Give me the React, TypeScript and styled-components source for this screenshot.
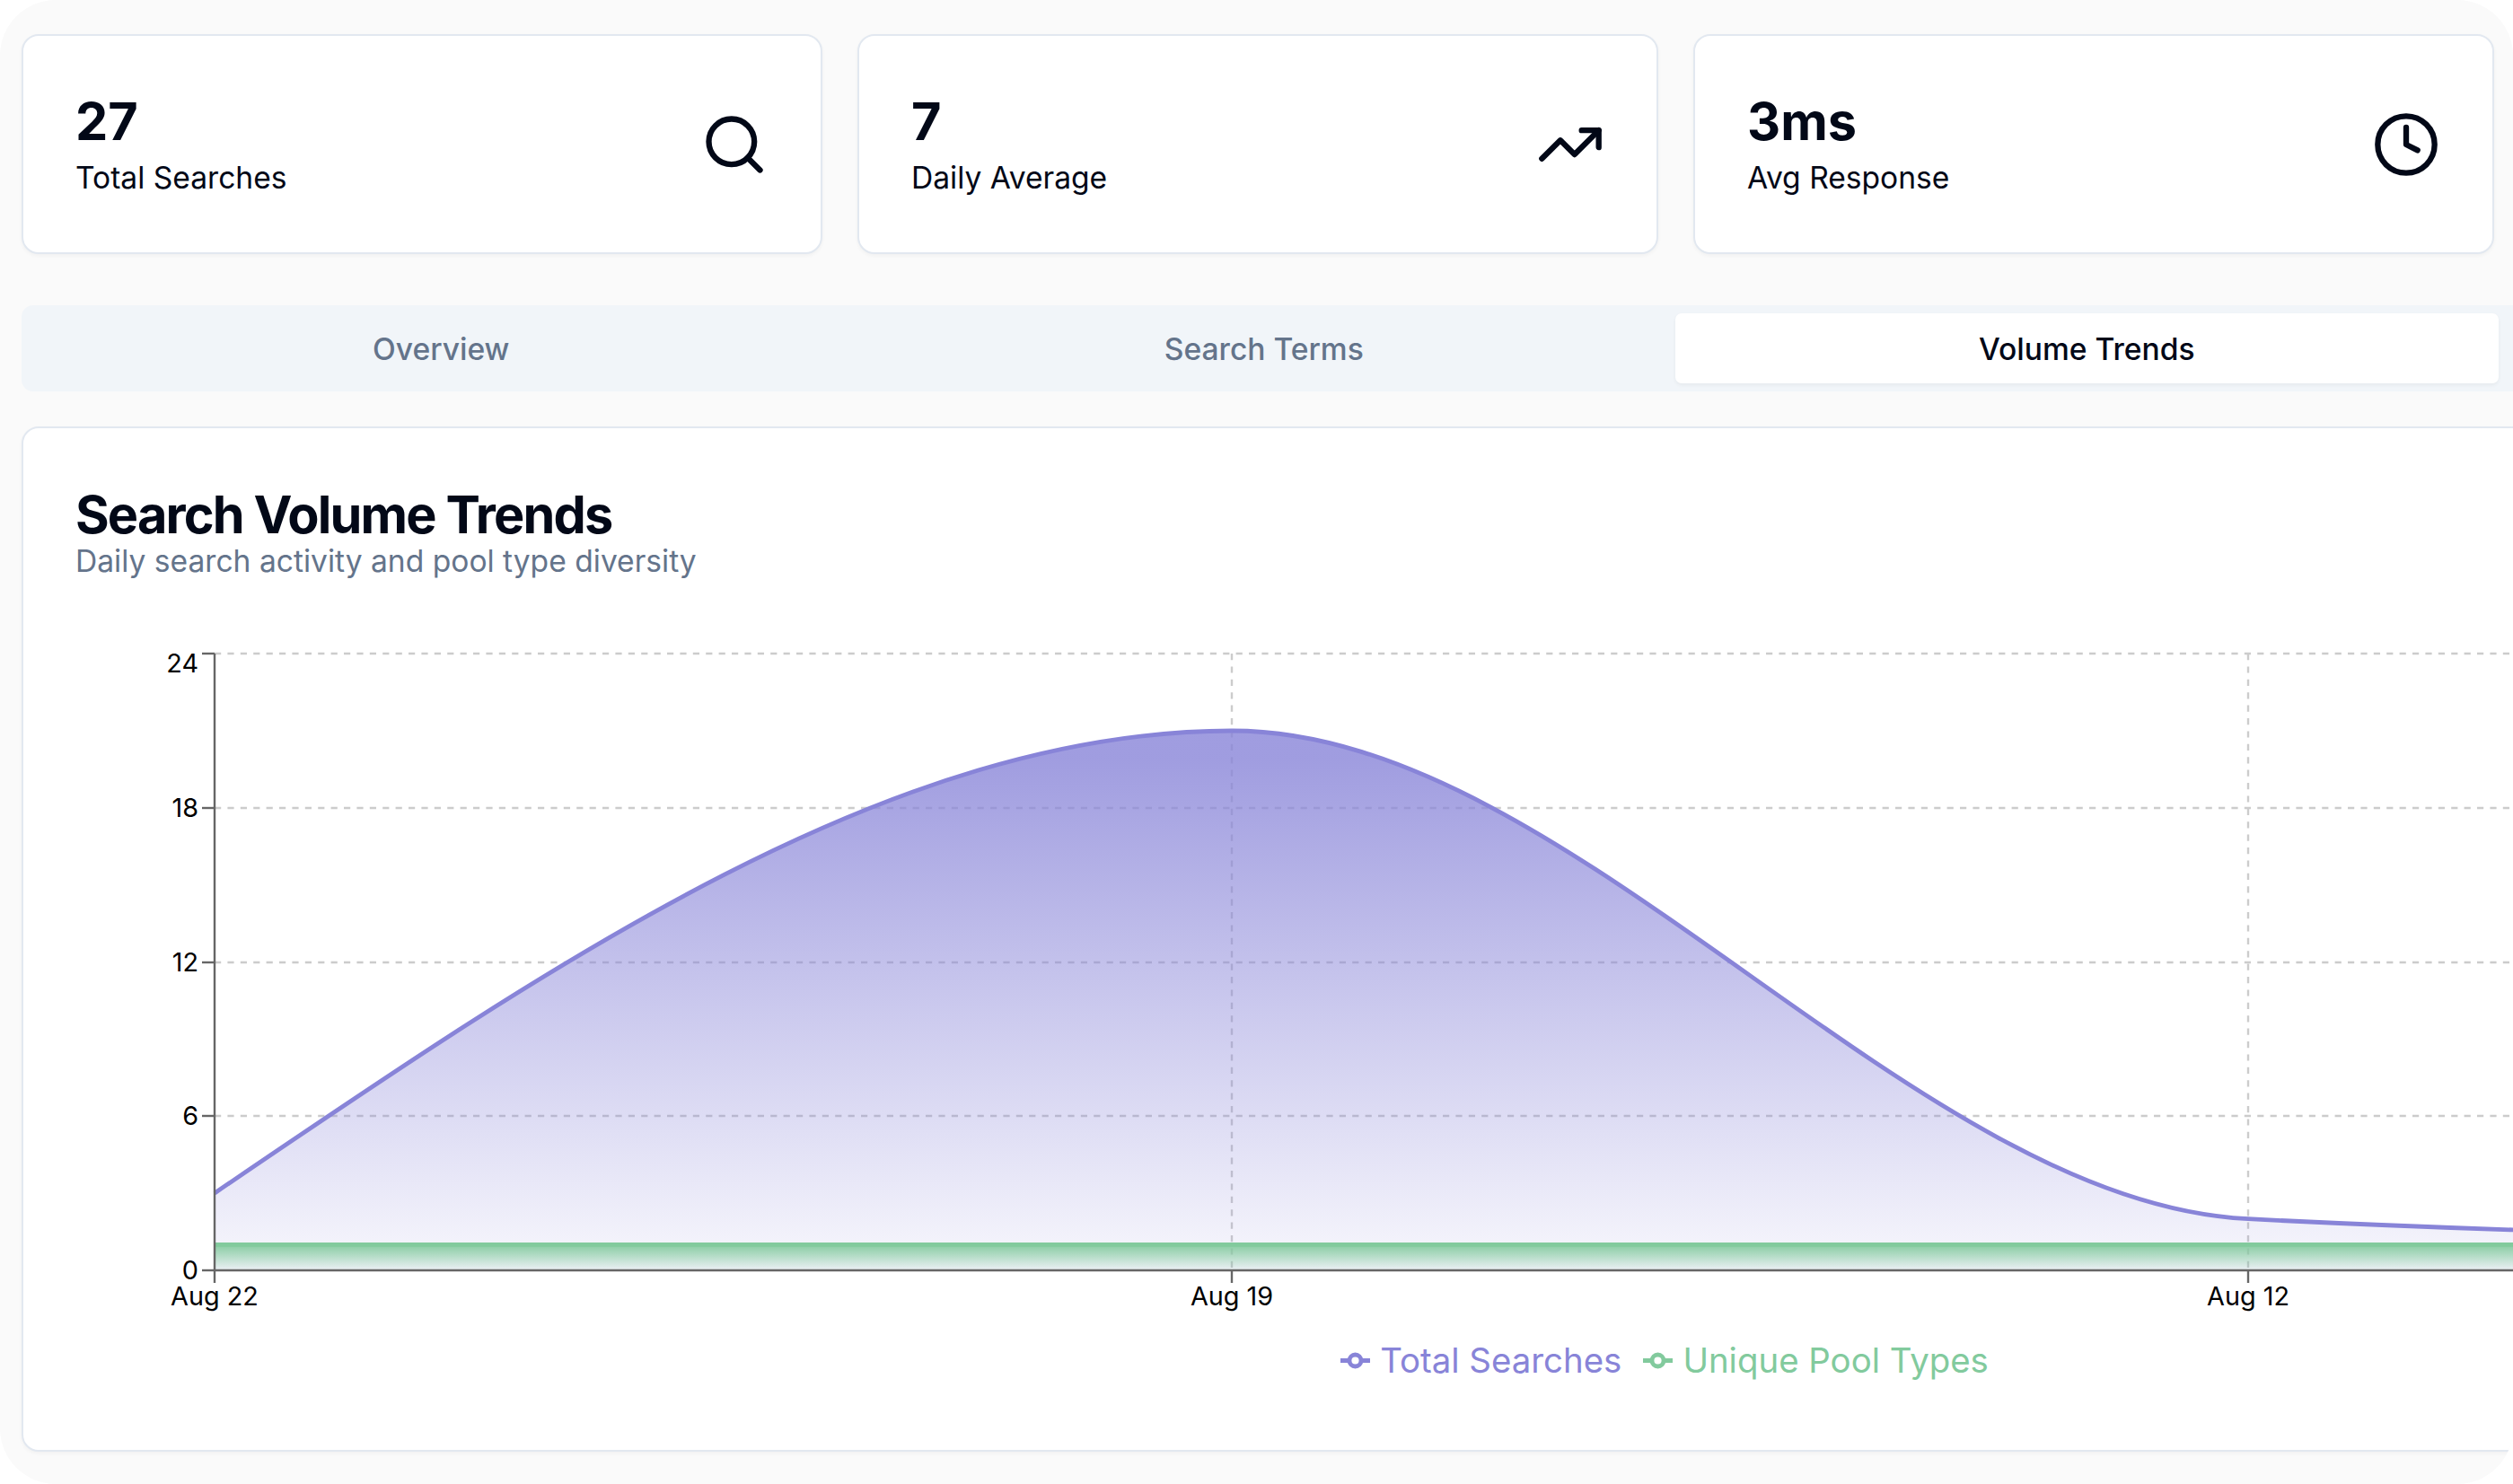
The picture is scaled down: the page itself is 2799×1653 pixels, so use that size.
import React from "react";
import styled, { createGlobalStyle } from "styled-components";
import { Search, TrendingUp, Clock } from "lucide-react";

const GlobalStyle = createGlobalStyle`
  html, body {
    margin: 0;
    padding: 0;
    background: #ffffff;
    font-family: Inter, "Liberation Sans", sans-serif;
  }
  * {
    box-sizing: border-box;
  }
`;

const Shell = styled.div`
  width: 2799px;
  height: 1653px;
  padding: 38px 0 0 24px;
  background: #fafafa;
  border-radius: 62px;
  overflow: hidden;
`;

const StatGrid = styled.div`
  display: grid;
  grid-template-columns: repeat(3, 891.5px);
  gap: 39.5px;
`;

const StatCard = styled.div`
  height: 245px;
  padding: 0 58px;
  display: flex;
  align-items: center;
  justify-content: space-between;
  background: #ffffff;
  border: 2.4px solid #e2e8f0;
  border-radius: 19px;
  box-shadow: 0 2px 4px rgba(0, 0, 0, 0.04);
`;

const StatValue = styled.div`
  font-size: 57.6px;
  line-height: 66px;
  font-weight: 700;
  color: #020817;
`;

const StatLabel = styled.div`
  margin-top: 8px;
  font-size: 33.6px;
  line-height: 44px;
  font-weight: 400;
  color: #020817;
`;

const TabList = styled.div`
  display: grid;
  grid-template-columns: repeat(3, 916.5px);
  width: 2790px;
  margin-top: 57px;
  padding: 9px;
  background: #f1f5f9;
  border-radius: 13px;
`;

const Tab = styled.div<{ $active?: boolean }>`
  height: 78px;
  display: flex;
  align-items: center;
  justify-content: center;
  font-size: 33.6px;
  font-weight: 500;
  border-radius: 7px;
  color: ${({ $active }) => ($active ? "#020817" : "#64748b")};
  background: ${({ $active }) => ($active ? "#ffffff" : "transparent")};
  box-shadow: ${({ $active }) =>
    $active ? "0 2px 4px rgba(0, 0, 0, 0.05)" : "none"};
`;

const ChartCard = styled.div`
  width: 3660px;
  height: 1142px;
  margin-top: 39px;
  padding: 66px 58px 0;
  background: #ffffff;
  border: 2.4px solid #e2e8f0;
  border-radius: 19px;
  box-shadow: 0 2px 4px rgba(0, 0, 0, 0.04);
`;

const ChartTitle = styled.h2`
  margin: 0;
  font-size: 57.6px;
  line-height: 60px;
  font-weight: 700;
  letter-spacing: -1.84px;
  color: #020817;
`;

const ChartSubtitle = styled.p`
  margin: 0;
  font-size: 33.6px;
  line-height: 44px;
  color: #64748b;
`;

const ChartSvg = styled.svg`
  display: block;
  margin-top: 53px;
  overflow: visible;
`;

const TickText = styled.text`
  font-family: Inter, "Liberation Sans", sans-serif;
  font-size: 28.8px;
  fill: #000000;
`;

const Legend = styled.div`
  display: flex;
  justify-content: center;
  gap: 24px;
  margin-top: 45px;
`;

const LegendItem = styled.div<{ $color: string }>`
  display: flex;
  align-items: center;
  gap: 11px;
  font-size: 38.4px;
  line-height: 50px;
  color: ${({ $color }) => $color};
`;

const stats = [
  { value: "27", label: "Total Searches", Icon: Search },
  { value: "7", label: "Daily Average", Icon: TrendingUp },
  { value: "3ms", label: "Avg Response", Icon: Clock },
];

const PURPLE = "#8884d8";
const GREEN = "#82ca9d";

// page coordinates minus the svg origin
const ox = 84;
const oy = 700;
const px = (x: number) => x - ox;
const py = (y: number) => y - oy;

const yTicks = [
  { label: "24", y: 728 },
  { label: "18", y: 900 },
  { label: "12", y: 1072 },
  { label: "6", y: 1243 },
  { label: "0", y: 1415 },
];

const xTicks = [
  { label: "Aug 22", x: 239 },
  { label: "Aug 19", x: 1372 },
  { label: "Aug 12", x: 2504 },
];

const curve =
  `M${px(239)} ${py(1329)}` +
  `C${px(617)} ${py(1071.5)} ${px(994)} ${py(814)} ${px(1372)} ${py(814)}` +
  `C${px(1750)} ${py(814)} ${px(2126)} ${py(1338.6)} ${px(2504)} ${py(1357.7)}` +
  `C${px(2882)} ${py(1376.8)} ${px(3259)} ${py(1381.6)} ${px(3637)} ${py(1386.4)}`;

function VolumeChart() {
  const base = py(1415);
  const flat = py(1386.4);
  return (
    <ChartSvg width={3542} height={745} viewBox="0 0 3542 745">
      <defs>
        <linearGradient id="fillSearches" x1="0" y1="0" x2="0" y2="1">
          <stop offset="5%" stopColor={PURPLE} stopOpacity={0.8} />
          <stop offset="95%" stopColor={PURPLE} stopOpacity={0.1} />
        </linearGradient>
        <linearGradient id="fillPools" x1="0" y1="0" x2="0" y2="1">
          <stop offset="5%" stopColor={GREEN} stopOpacity={0.9} />
          <stop offset="95%" stopColor={GREEN} stopOpacity={0.1} />
        </linearGradient>
      </defs>

      <g stroke="#cccccc" strokeWidth={2.4} strokeDasharray="7.2 7.2">
        {yTicks.slice(0, 4).map((t) => (
          <line key={t.label} x1={px(239)} x2={px(3637)} y1={py(t.y)} y2={py(t.y)} />
        ))}
        {xTicks.slice(1).map((t) => (
          <line key={t.label} x1={px(t.x)} x2={px(t.x)} y1={py(728)} y2={base} />
        ))}
      </g>

      <path d={`${curve}L${px(3637)} ${base}L${px(239)} ${base}Z`} fill="url(#fillSearches)" />
      <path d={curve} fill="none" stroke={PURPLE} strokeWidth={4.8} />
      <rect x={px(239)} y={flat} width={3398} height={base - flat} fill="url(#fillPools)" />
      <line x1={px(239)} x2={px(3637)} y1={flat} y2={flat} stroke={GREEN} strokeWidth={4.8} />

      <g stroke="#666666" strokeWidth={2.4}>
        <line x1={px(239)} x2={px(239)} y1={py(728)} y2={base} />
        <line x1={px(239)} x2={px(3637)} y1={base} y2={base} />
        {yTicks.map((t) => (
          <line key={t.label} x1={px(225)} x2={px(239)} y1={py(t.y)} y2={py(t.y)} />
        ))}
        {xTicks.map((t) => (
          <line key={t.label} x1={px(t.x)} x2={px(t.x)} y1={base} y2={base + 14} />
        ))}
      </g>

      {yTicks.map((t) => (
        <TickText
          key={t.label}
          x={px(221)}
          y={t.label === "24" ? py(749) : py(t.y) + 10}
          textAnchor="end"
        >
          {t.label}
        </TickText>
      ))}
      {xTicks.map((t) => (
        <TickText key={t.label} x={px(t.x)} y={base + 39} textAnchor="middle">
          {t.label}
        </TickText>
      ))}
    </ChartSvg>
  );
}

function LegendMark({ color }: { color: string }) {
  return (
    <svg width="33" height="33" viewBox="0 0 33 33">
      <line x1="0" x2="33" y1="16.5" y2="16.5" stroke={color} strokeWidth={4.8} />
      <circle cx="16.5" cy="16.5" r="6.5" fill="#ffffff" stroke={color} strokeWidth={4.8} />
    </svg>
  );
}

export default function App() {
  return (
    <>
      <GlobalStyle />
      <Shell>
        <StatGrid>
          {stats.map(({ value, label, Icon }) => (
            <StatCard key={label}>
              <div>
                <StatValue>{value}</StatValue>
                <StatLabel>{label}</StatLabel>
              </div>
              <Icon size={76} color="#020817" strokeWidth={2} />
            </StatCard>
          ))}
        </StatGrid>
        <TabList>
          <Tab>Overview</Tab>
          <Tab>Search Terms</Tab>
          <Tab $active>Volume Trends</Tab>
        </TabList>
        <ChartCard>
          <ChartTitle>Search Volume Trends</ChartTitle>
          <ChartSubtitle>Daily search activity and pool type diversity</ChartSubtitle>
          <VolumeChart />
          <Legend>
            <LegendItem $color={PURPLE}>
              <LegendMark color={PURPLE} />
              Total Searches
            </LegendItem>
            <LegendItem $color={GREEN}>
              <LegendMark color={GREEN} />
              Unique Pool Types
            </LegendItem>
          </Legend>
        </ChartCard>
      </Shell>
    </>
  );
}
